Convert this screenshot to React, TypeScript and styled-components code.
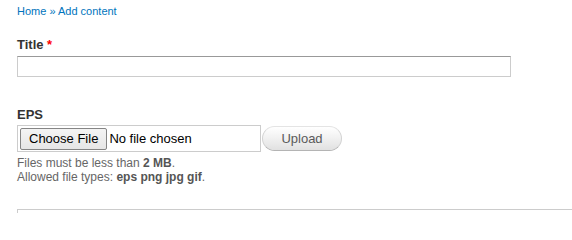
import * as React from "react";
import styled, {createGlobalStyle} from "styled-components";

const GlobalStyle = createGlobalStyle`
    html, body {
        margin: 0;
        padding: 0;
        background: #ffffff;
    }
    body {
        font-family: "Liberation Sans", Arial, sans-serif;
        color: #333333;
        overflow: hidden;
    }
`;

const Page = styled.div`
    padding: 4px 0 0 17px;
    width: 572px;
    height: 213px;
    box-sizing: border-box;
    overflow: hidden;
`;

const Breadcrumb = styled.div`
    font-size: 11px;
    line-height: 14px;
    color: #0074bd;
    margin-bottom: 19px;
`;

const Crumb = styled.a`
    color: #0074bd;
    text-decoration: none;
`;

const FormItem = styled.div<{gap: number}>`
    margin-bottom: ${props => props.gap + "px"};
`;

const Label = styled.label<{space: number}>`
    display: block;
    font-size: 13px;
    line-height: 16px;
    font-weight: bold;
    color: #333333;
    margin-bottom: ${props => props.space + "px"};
`;

const Required = styled.span`
    color: #ff0000;
`;

const TextInput = styled.input`
    display: block;
    box-sizing: border-box;
    width: 494px;
    height: 21px;
    margin: 0;
    padding: 2px 4px;
    border: 1px solid #cccccc;
    border-top-color: #999999;
    border-radius: 0;
    font-family: inherit;
    font-size: 13px;
    outline: none;
`;

const UploadRow = styled.div`
    display: flex;
    align-items: center;
`;

const FileBox = styled.div`
    display: flex;
    align-items: center;
    gap: 2px;
    box-sizing: border-box;
    width: 244px;
    height: 27px;
    padding: 0 2px;
    border: 1px solid #cccccc;
`;

const ChooseButton = styled.button`
    box-sizing: border-box;
    height: 22px;
    padding: 0 8px;
    margin: 0;
    border: 1px solid #858585;
    border-radius: 2px;
    background: linear-gradient(#f4f4f4, #e6e6e6);
    font-family: inherit;
    font-size: 13px;
    color: #000000;
`;

const NoFile = styled.span`
    font-size: 13px;
    color: #000000;
`;

const UploadButton = styled.button`
    box-sizing: border-box;
    height: 25px;
    width: 80px;
    margin: 0 0 0 1px;
    padding: 0;
    border: 1px solid #e4e4e4;
    border-bottom-color: #b4b4b4;
    border-left-color: #d2d2d2;
    border-right-color: #d2d2d2;
    border-radius: 20px;
    background: linear-gradient(#ffffff, #f2f2f2 45%, #e1e1e1);
    font-family: inherit;
    font-size: 13px;
    color: #5a5a5a;
`;

const Description = styled.div`
    margin-top: 4px;
    font-size: 12px;
    line-height: 14px;
    color: #666666;
`;

const Strong = styled.strong`
    font-weight: bold;
    color: #555555;
`;

const NextBox = styled.div`
    margin-top: 25px;
    height: 40px;
    border-top: 1px solid #cccccc;
    border-left: 1px solid #cccccc;
`;

export default function App() {
    return (
        <>
            <GlobalStyle/>
            <Page>
                <Breadcrumb>
                    <Crumb href="#">Home</Crumb> » <Crumb href="#">Add content</Crumb>
                </Breadcrumb>

                <FormItem gap={30}>
                    <Label space={3}>Title <Required>*</Required></Label>
                    <TextInput type="text"/>
                </FormItem>

                <FormItem gap={0}>
                    <Label space={2}>EPS</Label>
                    <UploadRow>
                        <FileBox>
                            <ChooseButton type="button">Choose File</ChooseButton>
                            <NoFile>No file chosen</NoFile>
                        </FileBox>
                        <UploadButton type="button">Upload</UploadButton>
                    </UploadRow>
                    <Description>
                        Files must be less than <Strong>2 MB</Strong>.<br/>
                        Allowed file types: <Strong>eps png jpg gif</Strong>.
                    </Description>
                </FormItem>

                <NextBox/>
            </Page>
        </>
    );
}
